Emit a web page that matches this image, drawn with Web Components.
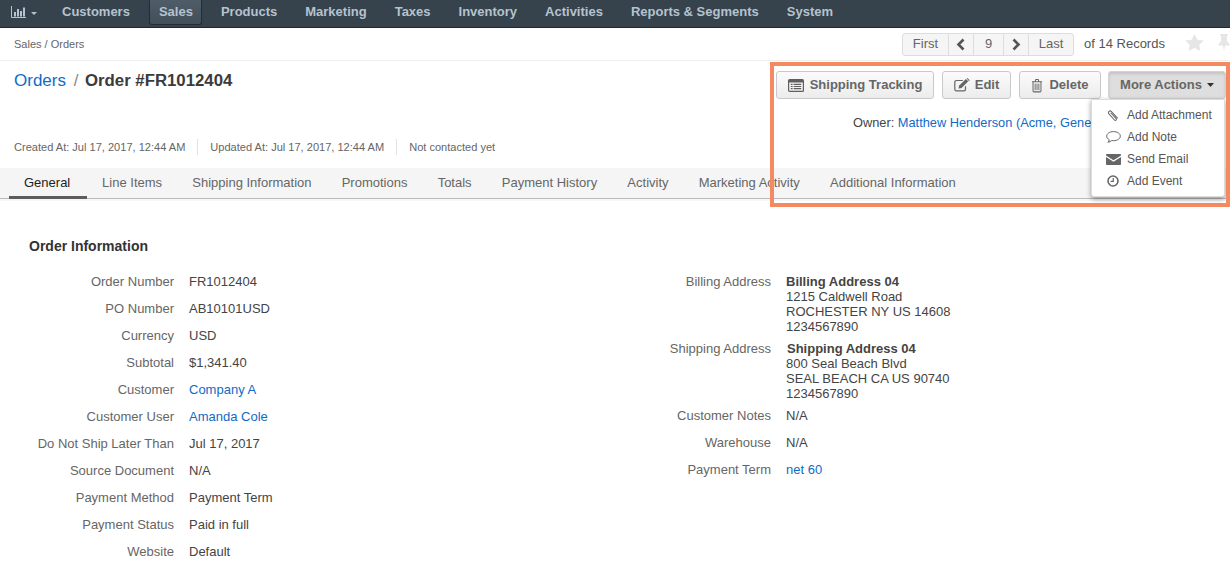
<!doctype html>
<html>
<head>
<meta charset="utf-8">
<style>
html, body { margin: 0; height: 100%; overflow: hidden; background: #fff; }
body { font: 12px/16px "Liberation Sans", Arial, sans-serif; color: #444; }
</style>
</head>
<body>
<app-nav></app-nav>
<page-bar></page-bar>
<order-head></order-head>
<order-tabs></order-tabs>
<order-info></order-info>
<script>
const ICONS = {
  chart: '<svg width="15" height="12" viewBox="0 0 15 12"><path d="M0.5 0v11.500H15" fill="none" stroke="#b5c3cf"/><path fill="#b5c3cf" d="M3 6h2v4.500H3zM6 3h2v7.500H6zM9 5h2v5.500H9zM12 1.500h2v9h-2z"/></svg>',
  tracking: '<svg width="16" height="13" viewBox="0 0 16 13"><rect x=".6" y=".6" width="14.800" height="11.800" rx="1" fill="none" stroke="#5f5f5f" stroke-width="1.200"/><path fill="#5f5f5f" d="M1 1h14v2.400H1zM2.800 4.800h1.800V6H2.800zM2.800 6.900h1.800v1.200H2.800zM2.800 9h1.800v1.200H2.800zM5.600 4.800h7.600V6H5.600zM5.600 6.900h7.600v1.200H5.600zM5.600 9h7.600v1.200H5.600z"/></svg>',
  edit: '<svg width="16" height="14" viewBox="0 0 16 14"><path d="M11.500 8.200v3a1.600 1.600 0 0 1-1.600 1.600H2.400A1.600 1.600 0 0 1 .8 11.200V4.100a1.600 1.600 0 0 1 1.600-1.600h6.400" fill="none" stroke="#666" stroke-width="1.200"/><path fill="#666" d="M5.200 7.600 11.900.9l2.400 2.400-6.700 6.700-3 .6z"/><path fill="#666" d="M12.600.3l.8-.3 2.300 2.300-.7.9z"/></svg>',
  trash: '<svg width="12" height="15" viewBox="0 0 13 15"><path d="M1 3.500h11M2.200 3.500v9.700c0 .7.4 1.200 1 1.200h6.600c.6 0 1-.5 1-1.200V3.500M4.400 3.300l.8-2.200h2.600l.8 2.200" fill="none" stroke="#666" stroke-width="1.100"/><path d="M4.500 5.500v7M6.500 5.500v7M8.500 5.500v7" stroke="#666" stroke-width="1"/></svg>',
  clip: '<svg width="12" height="13" viewBox="0 0 13 13"><path d="M11.600 10.200 4.600 2.600a1.900 1.900 0 0 0-2.800 2.500l6.300 6.900a1.200 1.200 0 0 0 1.800-1.600L4 4.100" fill="none" stroke="#666" stroke-width="1.100" transform="translate(0 -.6)"/></svg>',
  note: '<svg width="15" height="12" viewBox="0 0 15 12" style="margin-left:-1px"><path d="M7.500.6C3.700.6.700 2.600.7 5.100c0 1.500 1 2.800 2.600 3.700-.2 1-.8 1.900-1.500 2.500 1.600-.2 3-.9 3.900-1.800.6.100 1.200.2 1.800.2 3.800 0 6.800-2 6.800-4.600S11.300.6 7.500.6z" fill="none" stroke="#666" stroke-width="1"/></svg>',
  mail: '<svg width="15" height="11" viewBox="0 0 15 11" style="margin-left:-1px"><path fill="#666" d="M0 1.100C0 .5.500 0 1.100 0h12.800c.6 0 1.100.5 1.100 1.100v.4L7.500 6.300 0 1.500zM0 3l7.500 4.800L15 3v6.900c0 .6-.5 1.100-1.100 1.100H1.100C.5 11 0 10.500 0 9.900z"/></svg>',
  clock: '<svg width="12" height="12" viewBox="0 0 13 13"><circle cx="6.500" cy="6.500" r="5.400" fill="none" stroke="#666" stroke-width="1.700"/><path d="M6.800 3.200v3.600H3.900" fill="none" stroke="#666" stroke-width="1.300"/></svg>'
};

class AppNav extends HTMLElement {
  constructor() {
    super();
    const items = ['Customers', 'Sales', 'Products', 'Marketing', 'Taxes', 'Inventory', 'Activities', 'Reports &amp; Segments', 'System'];
    this.attachShadow({ mode: 'open' }).innerHTML = `
      <style>
        :host { display: flex; align-items: stretch; height: 27px; background: #36424c; border-bottom: 1px solid #20282f; padding-left: 11px; }
        .dash { display: flex; align-items: center; gap: 5px; width: 37px; }
        .dash svg { margin-top: -3px; }
        .dash i { border: 3px solid transparent; border-top: 3px solid #b5c3cf; border-bottom: 0; }
        a { color: #b5c3cf; font: bold 13px/23px "Liberation Sans", Arial, sans-serif; padding: 0 14px; height: 24px; }
        a.on { background: linear-gradient(#4f5d69, #434f5a); border: 1px solid #252d34; border-top: 0; border-radius: 0 0 3px 3px; padding: 0 8px 0 9px; margin: 0 5px; }
      </style>
      <div class="dash">${ICONS.chart}<i></i></div>
      ${items.map(t => `<a class="${t === 'Sales' ? 'on' : ''}">${t}</a>`).join('')}`;
  }
}

class PageBar extends HTMLElement {
  constructor() {
    super();
    this.attachShadow({ mode: 'open' }).innerHTML = `
      <style>
        :host { display: flex; align-items: center; height: 32px; padding-left: 14px; border-bottom: 1px solid #eee; color: #666; font-size: 11px; }
        .crumb { flex: 1; }
        .pager { display: flex; box-sizing: border-box; height: 23px; width: 172px; border: 1px solid #ddd; border-radius: 3px; background: #f5f5f5; font-size: 13px; color: #666; margin-right: 10px; }
        .pager span { display: flex; align-items: center; justify-content: center; box-sizing: border-box; border-left: 1px solid #ddd; }
        .pager span:first-child { border-left: 0; }
        .of { font-size: 13px; color: #555; width: 101px; }
        .marks { display: flex; align-items: flex-start; gap: 14px; width: 45px; height: 18px; margin-top: -3px; }
      </style>
      <div class="crumb">Sales / Orders</div>
      <div class="pager">
        <span style="width:45px">First</span>
        <span style="width:25px"><svg width="10" height="13" viewBox="0 0 10 13"><path d="M7.500 1.500 2.500 6.500l5 5" fill="none" stroke="#555" stroke-width="2.600"/></svg></span>
        <span style="width:30px">9</span>
        <span style="width:25px"><svg width="10" height="13" viewBox="0 0 10 13"><path d="M2.500 1.500l5 5-5 5" fill="none" stroke="#555" stroke-width="2.600"/></svg></span>
        <span style="width:45px">Last</span>
      </div>
      <div class="of">of 14 Records</div>
      <div class="marks">
        <svg width="19" height="17" viewBox="0 0 19 18" preserveAspectRatio="none" style="flex:none"><path fill="#e6e6e6" d="m9.500 0 2.900 6 6.600.9-4.800 4.600 1.200 6.500-5.900-3.100L3.600 18l1.200-6.500L0 6.900 6.600 6z"/></svg>
        <svg width="12" height="18" viewBox="0 0 12 18" style="flex:none"><path fill="#e6e6e6" d="M2 0h8v1.500H9V7l2.500 3v1.500H7L6 18l-1-6.500H.5V10L3 7V1.500H2z"/></svg>
      </div>`;
  }
}

class ActionButton extends HTMLElement {
  constructor() {
    super();
    this.attachShadow({ mode: 'open' }).innerHTML = `
      <style>
        :host { display: inline-flex; align-items: center; justify-content: center; gap: 6px; box-sizing: border-box; height: 28px; border: 1px solid #c9c9c9; border-radius: 3px; background: linear-gradient(#fbfbfb, #ececec); color: #666; font-weight: bold; font-size: 13px; }
        :host([open]) { background: #dedede; border-color: #d2d2d2; box-shadow: inset 0 2px 3px rgba(0,0,0,.12); }
        ::slotted(span) { display: flex; }
      </style>
      <slot name="icon"></slot><slot></slot>`;
  }
}

class DropMenu extends HTMLElement {
  constructor() {
    super();
    const rows = [['clip', 'Add Attachment'], ['note', 'Add Note'], ['mail', 'Send Email'], ['clock', 'Add Event']];
    this.attachShadow({ mode: 'open' }).innerHTML = `
      <style>
        :host { position: absolute; top: 99px; left: 1091px; width: 134px; height: 98px; box-sizing: border-box; background: #fff; border: 1px solid #ddd; border-radius: 0 0 3px 3px; box-shadow: 0 2px 5px rgba(0,0,0,.4); padding-top: 4px; color: #555; font-size: 12px; z-index: 2; }
        div { display: flex; align-items: center; height: 22px; padding-left: 15px; }
        b { display: flex; justify-content: flex-start; width: 15px; margin-right: 5px; }
      </style>
      ${rows.map(r => `<div><b>${ICONS[r[0]]}</b>${r[1]}</div>`).join('')}`;
  }
}

class OrderHead extends HTMLElement {
  constructor() {
    super();
    this.attachShadow({ mode: 'open' }).innerHTML = `
      <style>
        :host { display: block; position: relative; height: 107px; }
        .top { display: flex; justify-content: space-between; padding: 9px 4px 0 14px; height: 38px; }
        h1 { margin: 0; font: bold 16.800px/22px "Liberation Sans", Arial, sans-serif; color: #3b3b3b; }
        h1 a { font-weight: normal; font-size: 17px; color: #0f6bc8; }
        h1 i { font-style: normal; font-weight: normal; color: #888; margin: 0 2px 0 3px; }
        .btns { display: flex; gap: 8px; margin-top: 1px; }
        .owner { position: absolute; left: 853px; top: 54px; white-space: nowrap; font-size: 12.800px; color: #444; }
        .owner a { color: #0f6bc8; }
        .stamps { position: absolute; left: 14px; top: 78px; display: flex; font-size: 11.050px; color: #666; }
        .stamps span { padding-right: 12px; margin-right: 12px; border-right: 1px solid #e2e2e2; }
        .stamps span:last-child { border: 0; }
      </style>
      <div class="top">
        <h1><a>Orders</a> <i>/</i> Order #FR1012404</h1>
        <div class="btns">
          <action-button style="width:158px"><span slot="icon">${ICONS.tracking}</span>Shipping Tracking</action-button>
          <action-button style="width:69px;gap:5px"><span slot="icon">${ICONS.edit}</span>Edit</action-button>
          <action-button style="width:82px;margin-right:-1px"><span slot="icon">${ICONS.trash}</span>Delete</action-button>
          <action-button open style="width:118px;gap:5px">More Actions<svg width="7" height="4" viewBox="0 0 8 4" preserveAspectRatio="none"><path d="M0 0h8L4 4z" fill="#333"/></svg></action-button>
        </div>
      </div>
      <div class="owner">Owner: <a>Matthew Henderson (Acme, General)</a></div>
      <div class="stamps"><span>Created At: Jul 17, 2017, 12:44 AM</span><span>Updated At: Jul 17, 2017, 12:44 AM</span><span>Not contacted yet</span></div>`;
  }
}

class OrderTabs extends HTMLElement {
  constructor() {
    super();
    const tabs = ['General', 'Line Items', 'Shipping Information', 'Promotions', 'Totals', 'Payment History', 'Activity', 'Marketing Activity', 'Additional Information'];
    this.attachShadow({ mode: 'open' }).innerHTML = `
      <style>
        :host { display: flex; height: 30px; background: #f5f5f5; border-bottom: 1px solid #bbb; padding-left: 9px; box-shadow: 0 2px 0 #f7f7f7; }
        a { padding: 0 15.100px; line-height: 29px; height: 31px; box-sizing: border-box; color: #666; font-size: 13px; }
        a.on { width: 78px; padding: 0 15px; color: #222; border-bottom: 3px solid #5c5c5c; }
      </style>
      ${tabs.map((t, i) => `<a class="${i ? '' : 'on'}">${t}</a>`).join('')}`;
  }
}

class InfoRow extends HTMLElement {
  constructor() {
    super();
    this.attachShadow({ mode: 'open' }).innerHTML = `
      <style>
        :host { display: flex; gap: 15px; font-size: 13px; line-height: 15px; margin-bottom: 12px; }
        .k { width: var(--label-width); text-align: right; color: #666; flex: none; }
        .v { color: #444; }
        ::slotted(a) { color: #0f6bc8; }
        ::slotted(b) { color: #444; }
      </style>
      <div class="k">${this.getAttribute('label')}</div><div class="v"><slot></slot></div>`;
  }
}

class OrderInfo extends HTMLElement {
  constructor() {
    super();
    this.attachShadow({ mode: 'open' }).innerHTML = `
      <style>
        :host { display: block; padding: 39px 0 0 29px; }
        h2 { margin: 0 0 20px; font: bold 14px/16px "Liberation Sans", Arial, sans-serif; color: #333; }
        .cols { display: grid; grid-template-columns: 612px 1fr; margin-left: -29px; }
        .l { --label-width: 174px; }
        .r { --label-width: 159px; }
      </style>
      <h2>Order Information</h2>
      <div class="cols">
        <div class="l">
          <info-row label="Order Number">FR1012404</info-row>
          <info-row label="PO Number">AB10101USD</info-row>
          <info-row label="Currency">USD</info-row>
          <info-row label="Subtotal">$1,341.40</info-row>
          <info-row label="Customer"><a>Company A</a></info-row>
          <info-row label="Customer User"><a>Amanda Cole</a></info-row>
          <info-row label="Do Not Ship Later Than">Jul 17, 2017</info-row>
          <info-row label="Source Document">N/A</info-row>
          <info-row label="Payment Method">Payment Term</info-row>
          <info-row label="Payment Status">Paid in full</info-row>
          <info-row label="Website">Default</info-row>
        </div>
        <div class="r">
          <info-row label="Billing Address" style="margin-bottom:7px"><b>Billing Address 04</b><br>1215 Caldwell Road<br>ROCHESTER NY US 14608<br>1234567890</info-row>
          <info-row label="Shipping Address" style="margin-bottom:7px"><b style="margin-left:1px">Shipping Address 04</b><br>800 Seal Beach Blvd<br>SEAL BEACH CA US 90740<br>1234567890</info-row>
          <info-row label="Customer Notes">N/A</info-row>
          <info-row label="Warehouse">N/A</info-row>
          <info-row label="Payment Term"><a>net 60</a></info-row>
        </div>
      </div>`;
  }
}

class HighlightBox extends HTMLElement {
  constructor() {
    super();
    this.attachShadow({ mode: 'open' }).innerHTML = `
      <style>
        :host { position: absolute; left: 770px; top: 62px; width: 460px; height: 145px; box-sizing: border-box; border: 4px solid #f58a62; pointer-events: none; z-index: 3; }
      </style>`;
  }
}

customElements.define('app-nav', AppNav);
customElements.define('page-bar', PageBar);
customElements.define('action-button', ActionButton);
customElements.define('drop-menu', DropMenu);
customElements.define('order-head', OrderHead);
customElements.define('order-tabs', OrderTabs);
customElements.define('info-row', InfoRow);
customElements.define('order-info', OrderInfo);
customElements.define('highlight-box', HighlightBox);
document.body.append(document.createElement('drop-menu'), document.createElement('highlight-box'));
</script>
</body>
</html>
